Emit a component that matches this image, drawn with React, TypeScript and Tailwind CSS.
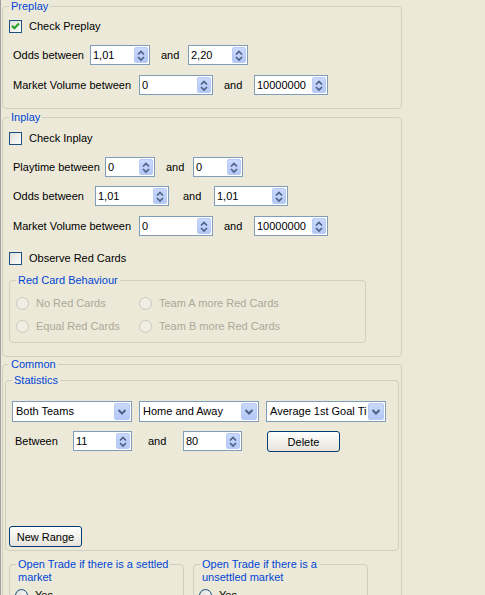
import React from 'react';

function Group({
  title,
  className = '',
  children,
}: {
  title: React.ReactNode;
  className?: string;
  children?: React.ReactNode;
}) {
  return (
    <fieldset className={`border border-[#D0D0BF] rounded-[4px] ${className}`}>
      <legend className="ml-[6px] px-[2px] leading-[12px] text-[#0046D5]">{title}</legend>
      {children}
    </fieldset>
  );
}

function SpinButton() {
  return (
    <span className="self-stretch my-[1px] mr-[1px] w-[14px] rounded-[2px] border border-[#B9CBF3] bg-linear-to-b from-[#CAD9FD] to-[#B4C8F6] flex items-center justify-center shrink-0">
      <svg width="12" height="15" viewBox="0 0 12 15">
        <path d="M3 6.5 L6 3.5 L9 6.5" stroke="#4D6185" strokeWidth="1.7" fill="none" />
        <path d="M3 9 L6 12 L9 9" stroke="#4D6185" strokeWidth="1.7" fill="none" />
      </svg>
    </span>
  );
}

function Spin({ value, className }: { value: string; className: string }) {
  return (
    <div className={`h-[20px] border border-[#7F9DB9] bg-white flex items-center shrink-0 ${className}`}>
      <span className="flex-1 pl-[2px] whitespace-nowrap overflow-hidden">{value}</span>
      <SpinButton />
    </div>
  );
}

function Drop({ text }: { text: string }) {
  return (
    <div className="w-[120px] h-[21px] border border-[#7F9DB9] bg-white flex items-center shrink-0">
      <span className="flex-1 pl-[3px] whitespace-nowrap overflow-hidden">{text}</span>
      <span className="self-stretch m-[1px] w-[16px] rounded-[2px] border border-[#B9CBF3] bg-linear-to-b from-[#CAD9FD] to-[#B4C8F6] flex items-center justify-center shrink-0">
        <svg width="10" height="8" viewBox="0 0 10 8">
          <path d="M1.5 2 L5 5.5 L8.5 2" stroke="#4D6185" strokeWidth="2" fill="none" />
        </svg>
      </span>
    </div>
  );
}

function Check({ checked, label }: { checked?: boolean; label: string }) {
  return (
    <div className="flex items-center h-[13px] ml-[6px] gap-[7px]">
      <span className="w-[13px] h-[13px] border border-[#1C5180] bg-linear-to-br from-[#DCDCD7] to-white flex items-center justify-center shrink-0">
        {checked && (
          <svg width="11" height="11" viewBox="0 0 11 11">
            <path d="M2 4.8 L4.3 7.2 L9 2.5" stroke="#21A121" strokeWidth="2" fill="none" />
          </svg>
        )}
      </span>
      <span className="whitespace-nowrap">{label}</span>
    </div>
  );
}

function Radio({ label, disabled }: { label: string; disabled?: boolean }) {
  return (
    <div className="flex items-center h-[13px] gap-[7px]">
      <span
        className={
          disabled
            ? 'w-[13px] h-[13px] rounded-full border border-[#CAC8BB] bg-[#EFEDE4] shrink-0'
            : 'w-[13px] h-[13px] rounded-full border border-[#1C5180] bg-linear-to-br from-[#DCDCD7] to-white shrink-0'
        }
      />
      <span className={disabled ? 'whitespace-nowrap text-[#ACA899]' : 'whitespace-nowrap'}>{label}</span>
    </div>
  );
}

function XPButton({ label }: { label: string }) {
  return (
    <button className="w-[73px] h-[21px] border border-[#003C74] rounded-[3px] bg-linear-to-b from-white to-[#E6E4DA] text-black text-[11px] leading-[12px] shrink-0">
      {label}
    </button>
  );
}

export default function App() {
  return (
    <div className="h-[595px] overflow-hidden bg-[#ECE9D8] text-black text-[11px] leading-[13px] font-['Liberation_Sans',Arial,sans-serif]">
      <div className="w-[402px] h-full border-l border-[#A0A0A0] pl-[1px]">
        {/* Preplay */}
        <Group title="Preplay" className="w-[400px] pb-[13px]">
          <div className="mt-[8px]">
            <Check checked label="Check Preplay" />
          </div>
          <div className="flex items-center h-[20px] mt-[12px] ml-[10px]">
            <span className="w-[77px] shrink-0">Odds between</span>
            <Spin value="1,01" className="w-[60px]" />
            <span className="ml-[11px] w-[27px] shrink-0">and</span>
            <Spin value="2,20" className="w-[60px]" />
          </div>
          <div className="flex items-center h-[20px] mt-[10px] ml-[10px]">
            <span className="w-[126px] shrink-0">Market Volume between</span>
            <Spin value="0" className="w-[74px]" />
            <span className="ml-[11px] w-[30px] shrink-0">and</span>
            <Spin value="10000000" className="w-[74px]" />
          </div>
        </Group>

        {/* Inplay */}
        <Group title="Inplay" className="w-[400px] mt-[2px] pb-[13px]">
          <div className="mt-[9px]">
            <Check label="Check Inplay" />
          </div>
          <div className="flex items-center h-[20px] mt-[12px] ml-[10px]">
            <span className="w-[92px] shrink-0">Playtime between</span>
            <Spin value="0" className="w-[50px]" />
            <span className="ml-[11px] w-[27px] shrink-0">and</span>
            <Spin value="0" className="w-[50px]" />
          </div>
          <div className="flex items-center h-[20px] mt-[9px] ml-[10px]">
            <span className="w-[82px] shrink-0">Odds between</span>
            <Spin value="1,01" className="w-[74px]" />
            <span className="ml-[14px] w-[31px] shrink-0">and</span>
            <Spin value="1,01" className="w-[74px]" />
          </div>
          <div className="flex items-center h-[20px] mt-[10px] ml-[10px]">
            <span className="w-[126px] shrink-0">Market Volume between</span>
            <Spin value="0" className="w-[74px]" />
            <span className="ml-[11px] w-[30px] shrink-0">and</span>
            <Spin value="10000000" className="w-[74px]" />
          </div>
          <div className="mt-[16px]">
            <Check label="Observe Red Cards" />
          </div>
          <Group title="Red Card Behaviour" className="w-[357px] ml-[6px] mt-[9px] pb-[9px]">
            <div className="grid grid-cols-[123px_auto] ml-[6px] mt-[11px] gap-y-[10px]">
              <Radio disabled label="No Red Cards" />
              <Radio disabled label="Team A more Red Cards" />
              <Radio disabled label="Equal Red Cards" />
              <Radio disabled label="Team B more Red Cards" />
            </div>
          </Group>
        </Group>

        {/* Common */}
        <Group title="Common" className="w-[400px] mt-[1px] pb-[20px]">
          <Group title="Statistics" className="mx-[2px] mt-[4px] pb-[3px]">
            <div className="flex gap-[7px] mt-[15px] ml-[6px]">
              <Drop text="Both Teams" />
              <Drop text="Home and Away" />
              <Drop text="Average 1st Goal Time" />
            </div>
            <div className="flex items-start mt-[9px] ml-[9px]">
              <span className="w-[58px] h-[20px] flex items-center shrink-0">Between</span>
              <Spin value="11" className="w-[59px]" />
              <span className="ml-[16px] w-[35px] h-[20px] flex items-center shrink-0">and</span>
              <Spin value="80" className="w-[59px]" />
              <span className="ml-[25px]">
                <XPButton label="Delete" />
              </span>
            </div>
            <div className="mt-[74px] ml-[3px]">
              <XPButton label="New Range" />
            </div>
          </Group>
          <div className="flex gap-[9px] ml-[6px] mt-[7px]">
            <fieldset className="w-[175px] h-[80px] border border-[#D0D0BF] rounded-[4px]">
              <legend className="ml-[6px] px-[2px] leading-[13px] text-[#0046D5] whitespace-nowrap">
                Open Trade if there is a settled
              </legend>
              <div className="ml-[8px] leading-[13px] text-[#0046D5]">market</div>
              <div className="mt-[5px] ml-[5px]">
                <Radio label="Yes" />
              </div>
            </fieldset>
            <fieldset className="w-[175px] h-[80px] border border-[#D0D0BF] rounded-[4px]">
              <legend className="ml-[6px] px-[2px] leading-[13px] text-[#0046D5] whitespace-nowrap">
                Open Trade if there is a
              </legend>
              <div className="ml-[8px] leading-[13px] text-[#0046D5]">unsettled market</div>
              <div className="mt-[5px] ml-[5px]">
                <Radio label="Yes" />
              </div>
            </fieldset>
          </div>
        </Group>
      </div>
    </div>
  );
}
